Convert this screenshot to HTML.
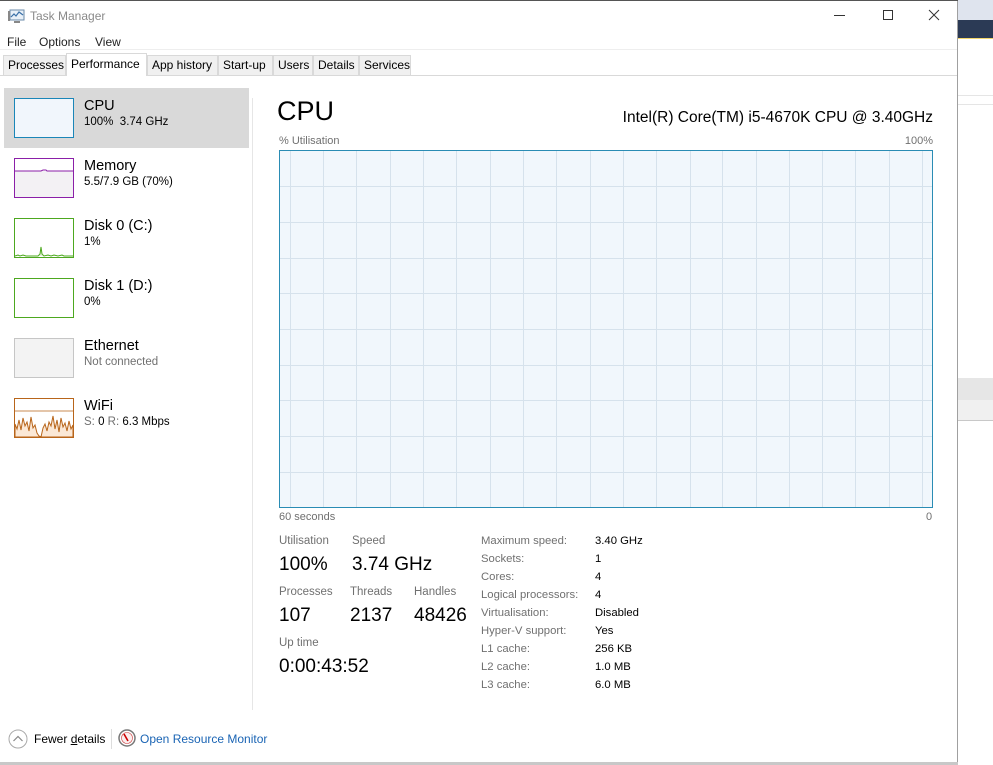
<!DOCTYPE html>
<html><head><meta charset="utf-8"><style>
*{margin:0;padding:0;box-sizing:border-box}
body{width:993px;height:765px;overflow:hidden;background:#fff;font-family:"Liberation Sans",sans-serif;position:relative;color:#000}
.a{position:absolute;white-space:nowrap}
.g{color:#707070}
.tab{position:absolute;top:55px;height:20px;border:1px solid #d9d9d9;border-bottom:none;background:#f0f0f0;font-size:12px;line-height:19px;padding:0 4px}
.thumb{position:absolute;left:14px;width:60px;height:40px}
.n{font-size:14.5px}
.s{font-size:11.5px}
.lbl{font-size:11.5px;color:#707070}
.big{font-size:19px}
</style></head><body>
<div class="a" style="left:957px;top:0;width:36px;height:20px;background:#dfe4ee"></div>
<div class="a" style="left:957px;top:20px;width:36px;height:18px;background:#2b3a55"></div>
<div class="a" style="left:957px;top:38px;width:36px;height:1px;background:#f2d56b"></div>
<div class="a" style="left:957px;top:95px;width:36px;height:1px;background:#e5e5e5"></div>
<div class="a" style="left:957px;top:104px;width:36px;height:1px;background:#e5e5e5"></div>
<div class="a" style="left:957px;top:378px;width:36px;height:22px;background:#e6e6e6"></div>
<div class="a" style="left:957px;top:400px;width:36px;height:20px;background:#f0f0f0"></div>
<div class="a" style="left:957px;top:420px;width:36px;height:1px;background:#c8c8c8"></div>
<div class="a" style="left:957px;top:0;width:1px;height:765px;background:#a0a0a0"></div>
<div class="a" style="left:0;top:762px;width:958px;height:3px;background:#c8c8c8"></div>
<div class="a" style="left:0;top:0;width:958px;height:1px;background:#555"></div>
<svg class="a" style="left:8px;top:8px" width="18" height="16" viewBox="0 0 18 16"><rect x="2" y="2" width="14" height="10" fill="#e8f0f8" stroke="#6a8aa8"/><path d="M3 9 L6 6 L8 8 L11 4 L15 7" fill="none" stroke="#3a70a8" stroke-width="1.2"/><rect x="0" y="3" width="2" height="10" fill="#888"/><rect x="6" y="13" width="6" height="2" fill="#888"/></svg>
<div class="a" style="left:30px;top:9px;font-size:12px;color:#8a8a8a">Task Manager</div>
<div class="a" style="left:834px;top:15px;width:11px;height:1px;background:#333"></div>
<div class="a" style="left:883px;top:10px;width:10px;height:10px;border:1px solid #333"></div>
<svg class="a" style="left:928px;top:9px" width="12" height="12"><path d="M1 1L11 11M11 1L1 11" stroke="#333" stroke-width="1"/></svg>
<div class="a" style="left:7px;top:35px;font-size:12px;color:#222">File</div>
<div class="a" style="left:39px;top:35px;font-size:12px;color:#222">Options</div>
<div class="a" style="left:95px;top:35px;font-size:12px;color:#222">View</div>
<div class="a" style="left:0;top:49px;width:957px;height:1px;background:#eee"></div>
<div class="a" style="left:0;top:75px;width:957px;height:1px;background:#d9d9d9"></div>
<div class="tab" style="left:3px;width:63px">Processes</div>
<div class="tab" style="left:66px;top:53px;height:23px;width:81px;background:#fff;line-height:20px">Performance</div>
<div class="tab" style="left:147px;width:71px">App history</div>
<div class="tab" style="left:218px;width:55px">Start-up</div>
<div class="tab" style="left:273px;width:40px">Users</div>
<div class="tab" style="left:313px;width:46px">Details</div>
<div class="tab" style="left:359px;width:52px">Services</div>
<div class="a" style="left:4px;top:88px;width:245px;height:60px;background:#d9d9d9"></div>
<div class="a" style="left:252px;top:98px;width:1px;height:612px;background:#e6e6e6"></div>
<div class="thumb" style="top:98px;border:1px solid #1a86b8;background:#f1f6fc"></div>
<div class="a n" style="left:84px;top:98px">CPU</div>
<div class="a s" style="left:84px;top:116px">100%&nbsp; 3.74 GHz</div>
<svg class="thumb" style="top:158px" width="60" height="40"><rect x=".5" y=".5" width="59" height="39" fill="#f3f1f4" stroke="#8b1fa8"/><rect x="1" y="1" width="58" height="12" fill="#fff"/><path d="M1 13H27L29 12H32L33 13H59" stroke="#8b1fa8" fill="none"/></svg>
<div class="a n" style="left:84px;top:158px">Memory</div>
<div class="a s" style="left:84px;top:176px">5.5/7.9 GB (70%)</div>
<svg class="thumb" style="top:218px" width="60" height="40"><rect x=".5" y=".5" width="59" height="39" fill="#fff" stroke="#4da81f"/><path d="M1 38L4 37L6 38L9 37L12 38H24L26 36L27 29L28 36L30 38L34 37L37 38L40 37L44 38L48 37L50 38H59" stroke="#4da81f" fill="#e6f2dc"/></svg>
<div class="a n" style="left:84px;top:218px">Disk 0 (C:)</div>
<div class="a s" style="left:84px;top:236px">1%</div>
<svg class="thumb" style="top:278px" width="60" height="40"><rect x=".5" y=".5" width="59" height="39" fill="#fff" stroke="#4da81f"/></svg>
<div class="a n" style="left:84px;top:278px">Disk 1 (D:)</div>
<div class="a s" style="left:84px;top:296px">0%</div>
<div class="thumb" style="top:338px;border:1px solid #c6c6c6;background:#f3f3f3"></div>
<div class="a n" style="left:84px;top:338px">Ethernet</div>
<div class="a s g" style="left:84px;top:356px">Not connected</div>
<svg class="thumb" style="top:398px" width="60" height="40"><rect x=".5" y=".5" width="59" height="39" fill="#fff" stroke="#b8651a"/><path d="M1 13H59" stroke="#b8651a" stroke-width=".8"/><path d="M1 39V26L3 31L5 22L7 32L9 20L11 28L13 24L15 33L17 19L19 30L21 27L23 35L25 38L27 39L29 30L31 26L33 33L35 24L37 28L39 18L41 31L43 22L45 34L47 20L49 29L51 25L53 33L55 23L57 31L59 27V39Z" fill="#fbe8d6" stroke="#b8651a"/></svg>
<div class="a n" style="left:84px;top:398px">WiFi</div>
<div class="a s" style="left:84px;top:416px"><span class="g">S:</span> 0 <span class="g">R:</span> 6.3 Mbps</div>
<div class="a" style="left:277px;top:96px;font-size:27px">CPU</div>
<div class="a" style="right:60px;top:109px;font-size:15.5px">Intel(R) Core(TM) i5-4670K CPU @ 3.40GHz</div>
<div class="a lbl" style="left:279px;top:135px;font-size:11px">% Utilisation</div>
<div class="a lbl" style="right:60px;top:135px;font-size:11px">100%</div>
<svg class="a" style="left:279px;top:150px" width="654" height="358">
<rect x=".5" y=".5" width="653" height="357" fill="#f1f7fc"/>
<g stroke="#d6e2ec" stroke-width="1">
<path d="M11.5 1V357M44.5 1V357M77.5 1V357M111.5 1V357M144.5 1V357M177.5 1V357M211.5 1V357M244.5 1V357M277.5 1V357M311.5 1V357M344.5 1V357M377.5 1V357M411.5 1V357M443.5 1V357M477.5 1V357M510.5 1V357M543.5 1V357M576.5 1V357M610.5 1V357M643.5 1V357"/>
<path d="M1 36.5H653M1 72.5H653M1 108.5H653M1 143.5H653M1 179.5H653M1 215.5H653M1 250.5H653M1 286.5H653M1 322.5H653"/>
</g>
<rect x=".5" y=".5" width="653" height="357" fill="none" stroke="#2a8cb4"/>
</svg>
<div class="a lbl" style="left:279px;top:511px;font-size:11px">60 seconds</div>
<div class="a lbl" style="left:926px;top:511px;font-size:11px">0</div>
<div class="a lbl" style="left:279px;top:535px">Utilisation</div>
<div class="a lbl" style="left:352px;top:535px">Speed</div>
<div class="a big" style="left:279px;top:554px">100%</div>
<div class="a big" style="left:352px;top:554px">3.74 GHz</div>
<div class="a lbl" style="left:279px;top:586px">Processes</div>
<div class="a lbl" style="left:350px;top:586px">Threads</div>
<div class="a lbl" style="left:414px;top:586px">Handles</div>
<div class="a big" style="left:279px;top:605px">107</div>
<div class="a big" style="left:350px;top:605px">2137</div>
<div class="a big" style="left:414px;top:605px">48426</div>
<div class="a lbl" style="left:279px;top:637px">Up time</div>
<div class="a big" style="left:279px;top:656px">0:00:43:52</div>
<div class="a lbl" style="left:481px;top:532px;line-height:18px;font-size:11.3px">Maximum speed:<br>Sockets:<br>Cores:<br>Logical processors:<br>Virtualisation:<br>Hyper-V support:<br>L1 cache:<br>L2 cache:<br>L3 cache:</div>
<div class="a" style="left:595px;top:532px;line-height:18px;font-size:11.3px">3.40 GHz<br>1<br>4<br>4<br>Disabled<br>Yes<br>256 KB<br>1.0 MB<br>6.0 MB</div>
<svg class="a" style="left:8px;top:729px" width="20" height="20"><circle cx="10" cy="10" r="9" fill="none" stroke="#aaa"/><path d="M5.5 12L10 7.5L14.5 12" fill="none" stroke="#888" stroke-width="1.2"/></svg>
<div class="a" style="left:34px;top:732px;font-size:12px">Fewer <u>d</u>etails</div>
<div class="a" style="left:111px;top:729px;width:1px;height:20px;background:#ddd"></div>
<svg class="a" style="left:118px;top:729px" width="18" height="18"><circle cx="9" cy="9" r="8" fill="#fff" stroke="#777" stroke-width="1.5"/><circle cx="9" cy="9" r="5.5" fill="#fbeeee" stroke="#c44" stroke-width=".6"/><path d="M6 5L10 12" stroke="#c00" stroke-width="1.6"/></svg>
<div class="a" style="left:140px;top:732px;font-size:12px;color:#1a64b4">Open Resource Monitor</div>
</body></html>
